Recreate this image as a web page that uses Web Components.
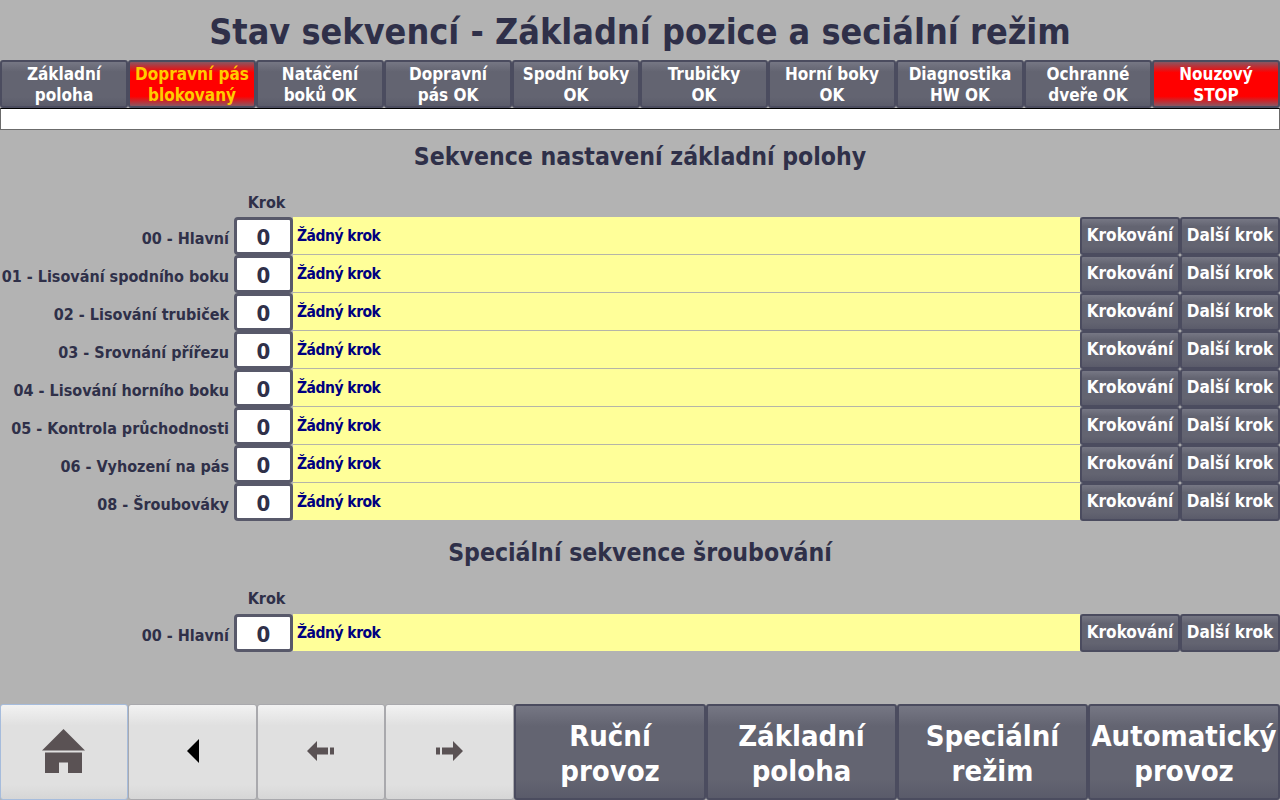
<!DOCTYPE html>
<html lang="cs">
<head>
<meta charset="utf-8">
<title>Stav sekvencí</title>
<style>
    html, body {
        margin: 0;
        height: 100%;
        background: #b3b3b3;
        font-family: "DejaVu Sans Condensed", "DejaVu Sans", sans-serif;
        font-weight: 700;
    }
    hmi-screen { width: 1280px; height: 800px; }
</style>
</head>
<body>
<template id="hmi-button-tpl">
    <style>
        :host {
            display: flex;
            box-sizing: border-box;
            min-width: 0;
            align-items: center;
            justify-content: center;
            text-align: center;
            color: #fff;
            border: 2px solid #4b4c5f;
            border-radius: 3px;
            padding-top: var(--btn-top, 0);
            padding-bottom: var(--btn-bottom, 0);
            background: linear-gradient(#767784 0, #636471 22%, #636471 80%, #5a5b6a 100%);
            font-size: var(--btn-size, 17px);
            line-height: var(--btn-line, 21px);
            white-space: nowrap;
        }
        :host([alarm]) {
            background: linear-gradient(#8b5560 0, #ff0000 24%, #ff0000 78%, #8b5560 100%);
        }
        :host([alarm="warn"]) { color: #ffcc00; }
        :host([light]) {
            border: 1px solid #a9a9ad;
            padding: 0 0 2px;
            background: linear-gradient(#f2f2f2 0, #e0e0e0 22%, #e0e0e0 85%, #d6d6d6 100%);
        }
        :host([focus]) { border: 1px solid #a6bcdc; }
    </style>
    <slot></slot>
</template>

<template id="hmi-row-tpl">
    <style>
        :host {
            display: grid;
            grid-template-columns: 234px 59px 787px 100px 100px;
            height: 38px;
        }
        .label {
            padding: 11px 5px 0 0;
            text-align: right;
            font-size: 16px;
            line-height: 22px;
            color: #2f3049;
            white-space: nowrap;
        }
        .value {
            box-sizing: border-box;
            height: 38px;
            padding-top: 3px;
            display: flex;
            align-items: center;
            justify-content: center;
            background: #fff;
            border: 3px solid #58596a;
            border-radius: 4px;
            color: #2f3049;
            font-size: 22px;
        }
        .text {
            box-sizing: border-box;
            height: 38px;
            padding: 8px 0 0 4px;
            background: #ffff99;
            border-bottom: 1px solid #b5b5a8;
            color: #000080;
            font-size: 15.5px;
            letter-spacing: -0.5px;
            line-height: 22px;
        }
        :host([last]) .text { border-bottom: 0; height: 37px; }
        hmi-button { height: 38px; --btn-bottom: 2px; }
    </style>
    <div class="label"><slot></slot></div>
    <div class="value">0</div>
    <div class="text">Žádný krok</div>
    <hmi-button>Krokování</hmi-button>
    <hmi-button>Další krok</hmi-button>
</template>

<template id="hmi-section-tpl">
    <style>
        :host { display: block; }
        h2 {
            margin: 0;
            height: 52px;
            padding-top: 1px;
            box-sizing: border-box;
            display: flex;
            align-items: center;
            justify-content: center;
            font-size: 24.6px;
            font-weight: 700;
            color: #2f3049;
        }
        .krok {
            box-sizing: border-box;
            height: var(--krok-h, 35px);
            padding: 10px 0 0 240px;
            width: 293px;
            text-align: center;
            font-size: 16px;
            line-height: 22px;
            color: #2f3049;
        }
    </style>
    <h2></h2>
    <div class="krok">Krok</div>
    <slot></slot>
</template>

<template id="hmi-status-tpl">
    <style>
        :host {
            display: grid;
            grid-template-columns: repeat(10, 128px);
            height: 48px;
            --btn-top: 1px;
        }
    </style>
    <slot></slot>
</template>

<template id="hmi-footer-tpl">
    <style>
        :host {
            display: grid;
            grid-template-columns: 128px 129px 128px 129px 192px 191px 191px 192px;
            height: 96px;
            margin-top: auto;
            --btn-size: 29px;
            --btn-line: 35px;
            --btn-top: 4px;
        }
    </style>
    <slot></slot>
</template>

<template id="hmi-screen-tpl">
    <style>
        :host { display: flex; flex-direction: column; }
        h1 {
            margin: 0;
            height: 60px;
            padding-top: 2px;
            box-sizing: border-box;
            display: flex;
            align-items: center;
            justify-content: center;
            font-size: 35.7px;
            font-weight: 700;
            color: #2f3049;
        }
        .message {
            box-sizing: border-box;
            height: 22px;
            background: #fff;
            border: 1px solid #6b6b6b;
            border-top-color: #000;
        }
    </style>
    <h1><slot name="title"></slot></h1>
    <slot name="status"></slot>
    <div class="message"></div>
    <slot></slot>
</template>

<hmi-screen>
    <span slot="title">Stav sekvencí - Základní pozice a seciální režim</span>
    <hmi-status slot="status">
        <hmi-button>Základní<br>poloha</hmi-button>
        <hmi-button alarm="warn">Dopravní pás<br>blokovaný</hmi-button>
        <hmi-button>Natáčení<br>boků OK</hmi-button>
        <hmi-button>Dopravní<br>pás OK</hmi-button>
        <hmi-button>Spodní boky<br>OK</hmi-button>
        <hmi-button>Trubičky<br>OK</hmi-button>
        <hmi-button>Horní boky<br>OK</hmi-button>
        <hmi-button>Diagnostika<br>HW OK</hmi-button>
        <hmi-button>Ochranné<br>dveře OK</hmi-button>
        <hmi-button alarm="stop">Nouzový<br>STOP</hmi-button>
    </hmi-status>

    <hmi-section heading="Sekvence nastavení základní polohy">
        <hmi-row>00 - Hlavní</hmi-row>
        <hmi-row>01 - Lisování spodního boku</hmi-row>
        <hmi-row>02 - Lisování trubiček</hmi-row>
        <hmi-row>03 - Srovnání přířezu</hmi-row>
        <hmi-row>04 - Lisování horního boku</hmi-row>
        <hmi-row>05 - Kontrola průchodnosti</hmi-row>
        <hmi-row>06 - Vyhození na pás</hmi-row>
        <hmi-row last>08 - Šroubováky</hmi-row>
    </hmi-section>

    <hmi-section heading="Speciální sekvence šroubování" style="margin-top:5px;--krok-h:36px">
        <hmi-row last>00 - Hlavní</hmi-row>
    </hmi-section>

    <hmi-footer>
        <hmi-button light focus>
            <svg width="44" height="44" viewBox="0 0 44 44" fill="#5a5254">
                <path d="M21.500 0 43 21.500H0z"/>
                <path d="M3 23.500h37V44H26V33.500h-9V44H3z"/>
            </svg>
        </hmi-button>
        <hmi-button light>
            <svg width="12" height="24" viewBox="0 0 12 24" fill="#000"><path d="M12 0v24L0 12z"/></svg>
        </hmi-button>
        <hmi-button light>
            <svg width="27" height="20" viewBox="0 0 27 20" fill="#5a5254" style="margin-right:2px">
                <path d="M10 0v6.500h11v7H10V20L0 10z"/><path d="M23 6.500h4v7h-4z"/>
            </svg>
        </hmi-button>
        <hmi-button light>
            <svg width="27" height="20" viewBox="0 0 27 20" fill="#5a5254">
                <path d="M17 0v6.500H6v7h11V20l10-10z"/><path d="M0 6.500h4v7H0z"/>
            </svg>
        </hmi-button>
        <hmi-button>Ruční<br>provoz</hmi-button>
        <hmi-button>Základní<br>poloha</hmi-button>
        <hmi-button>Speciální<br>režim</hmi-button>
        <hmi-button>Automatický<br>provoz</hmi-button>
    </hmi-footer>
</hmi-screen>

<script>
    // every element only clones its template, the section also fills its heading
    function shadowFrom(host, id) {
        const root = host.attachShadow({ mode: 'open' });
        root.appendChild(document.getElementById(id).content.cloneNode(true));
        return root;
    }

    class HmiButton extends HTMLElement {
        connectedCallback() { if (!this.shadowRoot) shadowFrom(this, 'hmi-button-tpl'); }
    }
    class HmiRow extends HTMLElement {
        connectedCallback() { if (!this.shadowRoot) shadowFrom(this, 'hmi-row-tpl'); }
    }
    class HmiSection extends HTMLElement {
        connectedCallback() {
            if (this.shadowRoot) return;
            const root = shadowFrom(this, 'hmi-section-tpl');
            root.querySelector('h2').textContent = this.getAttribute('heading');
        }
    }
    class HmiStatus extends HTMLElement {
        connectedCallback() { if (!this.shadowRoot) shadowFrom(this, 'hmi-status-tpl'); }
    }
    class HmiFooter extends HTMLElement {
        connectedCallback() { if (!this.shadowRoot) shadowFrom(this, 'hmi-footer-tpl'); }
    }
    class HmiScreen extends HTMLElement {
        connectedCallback() { if (!this.shadowRoot) shadowFrom(this, 'hmi-screen-tpl'); }
    }

    customElements.define('hmi-button', HmiButton);
    customElements.define('hmi-row', HmiRow);
    customElements.define('hmi-section', HmiSection);
    customElements.define('hmi-status', HmiStatus);
    customElements.define('hmi-footer', HmiFooter);
    customElements.define('hmi-screen', HmiScreen);
</script>
</body>
</html>
